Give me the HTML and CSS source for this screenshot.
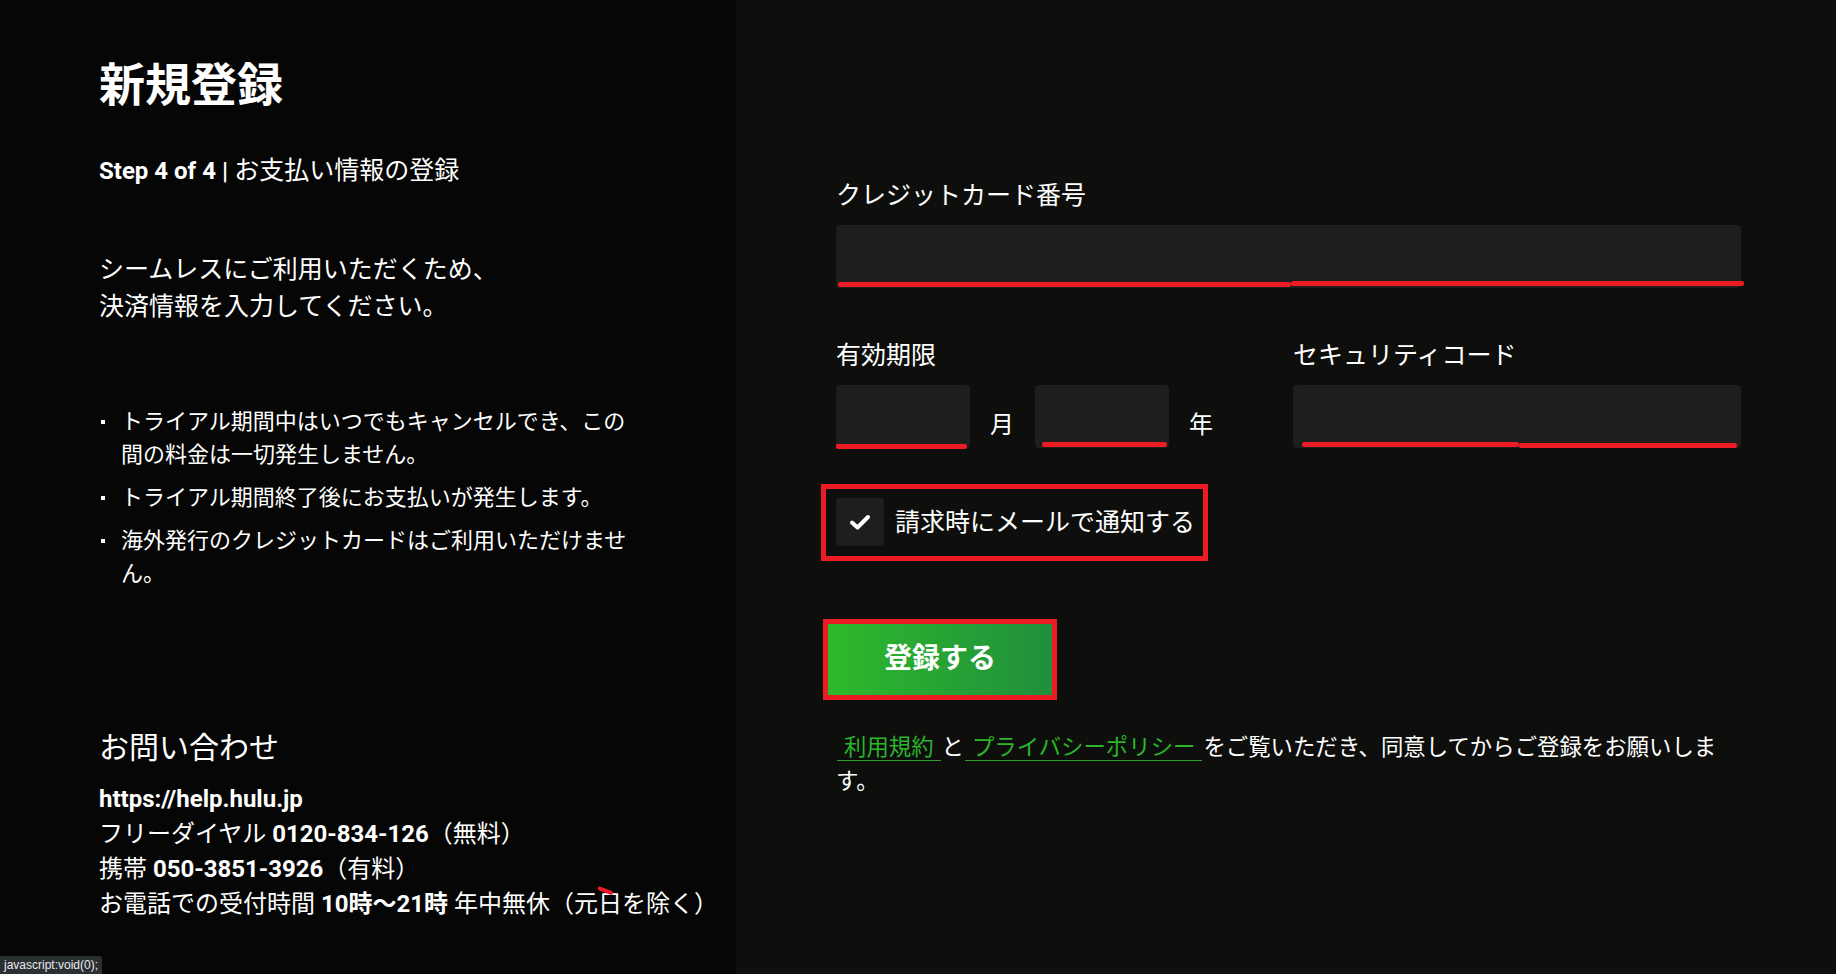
FILE: index.html
```html
<!DOCTYPE html>
<html lang="ja">
<head>
    <meta charset="utf-8">
    <title>新規登録</title>
    <link rel="stylesheet" href="styles.css">
</head>
<body>
    <!-- 左側：説明 -->
    <div class="side">
        <h1 class="title">新規登録</h1>
        <p class="step"><b>Step 4 of 4 |</b> お支払い情報の登録</p>
        <p class="lead">シームレスにご利用いただくため、<br>決済情報を入力してください。</p>
        <ul class="notes">
            <li>トライアル期間中はいつでもキャンセルでき、この間の料金は一切発生しません。</li>
            <li>トライアル期間終了後にお支払いが発生します。</li>
            <li>海外発行のクレジットカードはご利用いただけません。</li>
        </ul>
        <div class="contact">
            <h2>お問い合わせ</h2>
            <p><b>https://help.hulu.jp</b></p>
            <p>フリーダイヤル <b>0120-834-126</b>（無料）</p>
            <p>携帯 <b>050-3851-3926</b>（有料）</p>
            <p>お電話での受付時間 <b>10時〜21時</b> 年中無休（元<span class="tick">日</span>を除く）</p>
        </div>
    </div>

    <!-- 右側：フォーム -->
    <div class="main">
        <label class="label">クレジットカード番号</label>
        <div class="input">
            <span class="mark" style="left:2px;width:453px;top:57px"></span>
            <span class="mark" style="left:455px;width:453px;top:56px"></span>
        </div>

        <div class="row">
            <div>
                <label class="label">有効期限</label>
                <div class="expiry">
                    <div class="input small">
                        <span class="mark" style="left:0;width:131px;top:59px"></span>
                    </div>
                    <span class="unit">月</span>
                    <div class="input small">
                        <span class="mark" style="left:7px;width:125px;top:57px"></span>
                    </div>
                    <span class="unit">年</span>
                </div>
            </div>
            <div>
                <label class="label">セキュリティコード</label>
                <div class="input">
                    <span class="mark" style="left:9px;width:217px;top:57px"></span>
                    <span class="mark" style="left:226px;width:218px;top:58px"></span>
                </div>
            </div>
        </div>

        <label class="notify">
            <span class="check">
                <svg width="22" height="17" viewBox="0 0 22 17">
                    <path d="M3 8.5 L8.5 13.5 L19 3" fill="none" stroke="#fff" stroke-width="4" stroke-linecap="round" stroke-linejoin="round"/>
                </svg>
            </span>
            <span class="notify-text">請求時にメールで通知する</span>
        </label>

        <div class="submit">
            <button class="button">登録する</button>
        </div>

        <p class="terms"><a href="#">利用規約</a>と<a href="#">プライバシーポリシー</a>をご覧いただき、同意してからご登録をお願いします。</p>
    </div>

    <div class="status">javascript:void(0);</div>
</body>
</html>
```

FILE: styles.css
```css
/* 全体 */
body {
    margin: 0;
    display: flex;
    height: 100vh;
    overflow: hidden;
    background-color: #0e0f0d;
    color: #fff;
    font-family: Roboto, "Noto Sans CJK JP", sans-serif;
}
b {
    font-weight: 700;
}

/* 左側 */
.side {
    width: 736px;
    flex-shrink: 0;
    box-sizing: border-box;
    padding: 55px 0 0 99px;
    background-color: #050605;
}
.title {
    margin: 0;
    font-size: 46px;
    line-height: 60px;
    font-weight: 700;
}
.step {
    margin: 38px 0 0;
    font-size: 25px;
    line-height: 36px;
}
.step b {
    font-size: 24px;
}
.lead {
    margin: 62px 0 0;
    font-size: 25px;
    line-height: 37px;
}
.notes {
    list-style: none;
    margin: 80px 0 0;
    padding: 0;
    width: 537px;
    font-size: 22px;
    line-height: 33px;
}
.notes li {
    display: flex;
}
.notes li + li {
    margin-top: 10px;
}
.notes li::before {
    content: "";
    flex-shrink: 0;
    width: 4px;
    height: 4px;
    margin: 15px 16px 0 2px;
    background-color: #fff;
}
.contact h2 {
    margin: 138px 0 0;
    font-size: 30px;
    line-height: 40px;
    font-weight: 400;
}
.contact h2 + p {
    margin-top: 14px;
}
.contact p {
    margin: 0;
    font-size: 24px;
    line-height: 35px;
}
.tick {
    position: relative;
}
.tick::after {
    content: "";
    position: absolute;
    left: 0;
    top: -4px;
    width: 16px;
    height: 4px;
    border-radius: 2px;
    background-color: #ed1c24;
    transform: rotate(20deg);
    transform-origin: left center;
}

/* 右側 */
.main {
    flex: 1;
    padding: 179px 95px 0 100px;
}
.label {
    display: block;
    margin-bottom: 12px;
    font-size: 25px;
    line-height: 34px;
}
.input {
    position: relative;
    height: 63px;
    border-radius: 4px;
    background-color: #1e1f1d;
}
.input.small {
    width: 134px;
    flex-shrink: 0;
}
.mark {
    position: absolute;
    height: 5px;
    border-radius: 2px;
    background-color: #ed1c24;
}
.row {
    display: grid;
    grid-template-columns: 1fr 1fr;
    gap: 9px;
    margin-top: 51px;
}
.expiry {
    display: flex;
    align-items: center;
}
.unit {
    margin: 11px 21px 0 20px;
    font-size: 24px;
}
.notify {
    display: flex;
    align-items: center;
    gap: 11px;
    width: fit-content;
    margin: 36px 0 0 -15px;
    padding: 9px 8px 10px 10px;
    border: 5px solid #ed1c24;
    font-size: 25px;
}
.notify-text {
    padding-bottom: 4px;
}
.check {
    display: flex;
    align-items: center;
    justify-content: center;
    width: 48px;
    height: 48px;
    border-radius: 4px;
    background-color: #1e1f1d;
}
.submit {
    width: fit-content;
    margin: 58px 0 0 -13px;
    border: 5px solid #ed1c24;
}
.button {
    display: block;
    width: 224px;
    height: 71px;
    padding: 0 0 7px;
    border: none;
    background: linear-gradient(90deg, #2db92b, #208f3c);
    color: #fff;
    font-family: Roboto, "Noto Sans CJK JP", sans-serif;
    font-size: 28px;
    font-weight: 700;
    cursor: pointer;
}
.terms {
    margin: 30px 8px 0 0;
    font-size: 22.4px;
    line-height: 34px;
}
.terms a {
    margin: 0 1px;
    padding: 0 7px;
    color: #2ab52a;
    text-decoration: none;
    border-bottom: 1px solid #2a9d2a;
}

/* ステータスバー */
.status {
    position: fixed;
    left: 0;
    bottom: 0;
    height: 18px;
    padding: 0 4px;
    border-top-right-radius: 3px;
    background-color: #2b3033;
    color: #e8eaed;
    font-family: "Liberation Sans", sans-serif;
    font-size: 12px;
    line-height: 18px;
}
```
